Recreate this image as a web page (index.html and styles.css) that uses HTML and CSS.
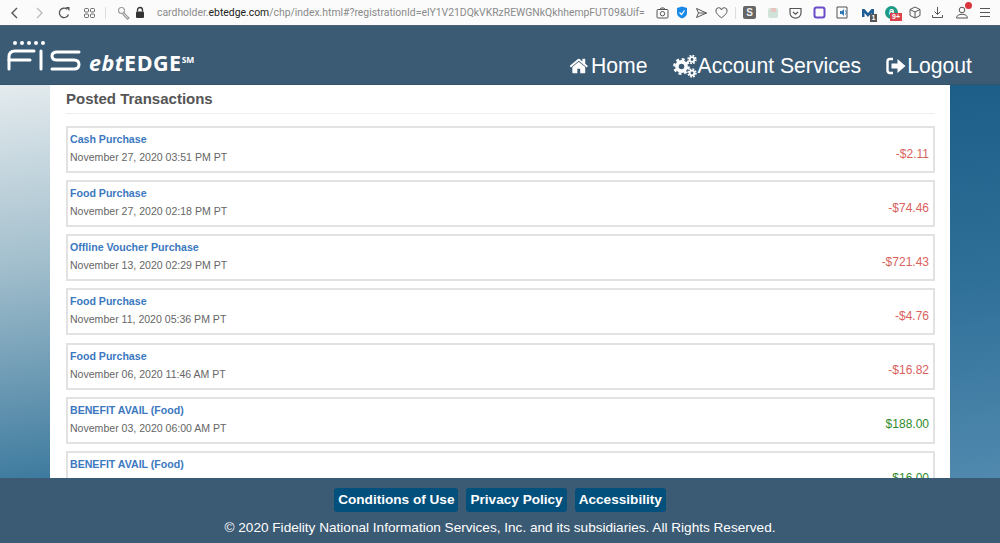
FILE: index.html
```html
<!DOCTYPE html>
<html lang="en">
<head>
    <meta charset="UTF-8">
    <meta name="viewport" content="width=device-width, initial-scale=1.0">
    <title>ebtEDGE - Posted Transactions</title>
    <link rel="stylesheet" href="styles.css">
</head>
<body>
    <div class="browser-bar">
        <div class="bar-left">
            <svg class="tb-icon" width="12" height="14" viewBox="0 0 12 14"><path d="M8 2 3 7l5 5" fill="none" stroke="#555" stroke-width="1.4"/></svg>
            <svg class="tb-icon" width="12" height="14" viewBox="0 0 12 14"><path d="M4 2l5 5-5 5" fill="none" stroke="#bbb" stroke-width="1.4"/></svg>
            <svg class="tb-icon" width="14" height="14" viewBox="0 0 14 14"><path d="M11.5 8.5A4.7 4.7 0 1 1 10 3.2" fill="none" stroke="#555" stroke-width="1.3"/><path d="M8.5 1h4v4z" fill="#555"/></svg>
            <svg class="tb-icon" width="13" height="12" viewBox="0 0 13 12"><g fill="none" stroke="#666"><rect x="1.5" y="1.5" width="4" height="3.5" rx="1"/><rect x="7.5" y="1.5" width="4" height="3.5" rx="1"/><rect x="1.5" y="7" width="4" height="3.5" rx="1"/><rect x="7.5" y="7" width="4" height="3.5" rx="1"/></g></svg>
            <span class="bar-divider"></span>
            <svg class="tb-icon key" width="14" height="14" viewBox="0 0 14 14"><g fill="none" stroke="#999" stroke-width="1.1"><circle cx="4.5" cy="4.5" r="3"/><path d="M6.7 6.7 12 12l-1.5 1.2L5.6 8"/></g></svg>
            <svg class="tb-icon lock" width="10" height="13" viewBox="0 0 10 13"><path d="M2.5 5.5V4a2.5 2.5 0 0 1 5 0v1.5" fill="none" stroke="#333" stroke-width="1.3"/><rect x="1" y="5.5" width="8" height="6.5" rx="1" fill="#333"/></svg>
        </div>
        <div class="url">cardholder.<b>ebtedge.com</b>/chp/index.html#?registrationId=elY1V21DQkVKRzREWGNkQkhhempFUT09&amp;Uif=</div>
        <div class="bar-right">
            <svg width="13" height="12" viewBox="0 0 13 12"><rect x="1" y="2.5" width="11" height="8.5" rx="1" fill="none" stroke="#555"/><circle cx="6.5" cy="6.7" r="2.2" fill="none" stroke="#555"/><path d="M4 2.5l1-1.5h3l1 1.5" fill="none" stroke="#555"/></svg>
            <svg width="12" height="13" viewBox="0 0 12 13"><path d="M6 .5 11 2v5c0 3-2.500 4.500-5 5.500C3.500 11.500 1 10 1 7V2z" fill="#1a8ae8"/><path d="M3.500 6.500 5.500 8.500 8.500 4.500" fill="none" stroke="#fff" stroke-width="1.200"/></svg>
            <svg width="13" height="12" viewBox="0 0 13 12"><path d="M1.500 1.500 11.500 6l-10 4.500 2-4.500zM3.500 6h8" fill="none" stroke="#555"/></svg>
            <svg width="13" height="12" viewBox="0 0 13 12"><path d="M6.500 10.800C2 7.500 1 5.700 1 4a2.700 2.700 0 0 1 5.500-1A2.700 2.700 0 0 1 12 4c0 1.700-1 3.500-5.500 6.800z" fill="none" stroke="#555"/></svg>
            <span class="bar-divider"></span>
            <div class="bar-ext">
                <span class="ext-s">S</span>
                <svg width="12" height="12" viewBox="0 0 12 12"><rect x="1" y="1" width="10" height="10" rx="2" fill="#cfe3d8"/><rect x="4" y="1" width="5" height="4" fill="#e8c4c0"/></svg>
                <svg width="13" height="12" viewBox="0 0 13 12"><path d="M1 1.500h11V6a5.500 5.200 0 0 1-11 0z" fill="none" stroke="#555" stroke-width="1.200"/><path d="M4 5l2.500 2.300L9 5" fill="none" stroke="#555" stroke-width="1.200"/></svg>
                <svg width="13" height="13" viewBox="0 0 13 13"><rect x="1.500" y="1.500" width="10" height="10" rx="2" fill="none" stroke="#6a4bc8" stroke-width="2"/></svg>
                <svg width="14" height="13" viewBox="0 0 14 13"><path d="M1 1h10v11H1z" fill="none" stroke="#555"/><path d="M4 5h2l2-2v7L6 8H4z" fill="#2f78b8"/><path d="M9.500 4.500a3 3 0 0 1 0 4" fill="none" stroke="#2f78b8"/></svg>
                <span class="ext-badge-wrap">
                    <svg width="14" height="12" viewBox="0 0 14 12"><path d="M1 10V2h2.500L7 6l3.500-4H13v8h-2.500V6L7 10 3.500 6v4z" fill="#1f5f95"/></svg>
                    <span class="ext-badge ext-badge-grey">1</span>
                </span>
                <span class="ext-badge-wrap">
                    <span class="ext-round">a</span>
                    <span class="ext-badge ext-badge-red">9+</span>
                </span>
                <svg width="12" height="13" viewBox="0 0 12 13"><path d="M6 1 11 3.500v6L6 12 1 9.500v-6zM1 3.500 6 6l5-2.500M6 6v6" fill="none" stroke="#555"/></svg>
                <svg width="13" height="13" viewBox="0 0 13 13"><path d="M6.500 1v7M3.500 5.500l3 3 3-3M1.500 9v2.500h10V9" fill="none" stroke="#555"/></svg>
                <span class="ext-badge-wrap">
                    <svg width="14" height="13" viewBox="0 0 14 13"><circle cx="7" cy="4" r="2.800" fill="none" stroke="#555"/><path d="M1.500 12c0-5 11-5 11 0z" fill="none" stroke="#555"/></svg>
                    <span class="user-dot"></span>
                </span>
                <svg width="12" height="11" viewBox="0 0 12 11"><path d="M1 1.500h10M1 5.500h10M1 9.500h10" stroke="#555" stroke-width="1.200"/></svg>
            </div>
        </div>
    </div>

    <div class="header">
        <div class="brand">
            <svg class="fis-logo" width="74" height="34" viewBox="0 0 74 34">
                <g fill="#fff">
                    <circle cx="8" cy="3" r="2"/><circle cx="15" cy="3" r="2"/><circle cx="22" cy="3" r="2"/><circle cx="29" cy="3" r="2"/><circle cx="36" cy="3" r="2"/>
                </g>
                <g fill="none" stroke="#fff" stroke-width="3" stroke-linecap="round">
                    <path d="M2 29V17q0-6 6-6h19"/>
                    <path d="M2 20h21"/>
                    <path d="M34 11v18"/>
                    <path d="M72 12H50q-5 0-5 4t5 4h17q5 0 5 4.500T67 29H45"/>
                </g>
            </svg>
            <span class="brand-name"><i>ebt</i>EDGE<sup>SM</sup></span>
        </div>
        <nav class="nav">
            <a class="nav-link" href="#">
                <svg width="21" height="20" viewBox="0 0 1792 1792"><path fill="#fff" d="M1408 992v480q0 26-19 45t-45 19h-384v-384h-256v384h-384q-26 0-45-19t-19-45v-480q0-1 .5-3t.5-3l575-474 575 474q1 2 1 6zm223-69l-62 74q-8 9-21 11h-3q-13 0-21-7l-692-577-692 577q-12 8-24 7-13-2-21-11l-62-74q-8-10-7-23.500t11-21.500l719-599q32-26 76-26t76 26l244 204v-195q0-14 9-23t23-9h192q14 0 23 9t9 23v408l219 182q10 8 11 21.500t-7 23.500z"/></svg>Home
            </a>
            <a class="nav-link" href="#">
                <svg width="24" height="24" viewBox="0 0 24 24" fill="none" stroke="#fff">
                    <circle cx="8.500" cy="12.500" r="4.600" stroke-width="3.600"/>
                    <circle cx="8.500" cy="12.500" r="7.200" stroke-width="2.400" stroke-dasharray="3 2.650"/>
                    <circle cx="19" cy="5.500" r="2.300" stroke-width="1.800"/>
                    <circle cx="19" cy="5.500" r="3.900" stroke-width="1.600" stroke-dasharray="1.800 1.260"/>
                    <circle cx="19" cy="19" r="2.300" stroke-width="1.800"/>
                    <circle cx="19" cy="19" r="3.900" stroke-width="1.600" stroke-dasharray="1.800 1.260"/>
                </svg>Account Services
            </a>
            <a class="nav-link" href="#">
                <svg width="20" height="18" viewBox="0 0 20 18"><path d="M7 2H4Q1.500 2 1.500 4.500v9Q1.500 16 4 16h3" fill="none" stroke="#fff" stroke-width="2.400"/><path d="M5.500 6.500h6V2l8 7-8 7v-4.500h-6z" fill="#fff"/></svg>Logout
            </a>
        </nav>
    </div>

    <div class="main">
        <div class="panel">
            <h2>Posted Transactions</h2>
            <div class="tx-list" id="tx-list"></div>
        </div>
    </div>

    <div class="footer">
        <div class="footer-links">
            <a class="footer-btn" href="#">Conditions of Use</a>
            <a class="footer-btn" href="#">Privacy Policy</a>
            <a class="footer-btn" href="#">Accessibility</a>
        </div>
        <div class="copyright">© 2020 Fidelity National Information Services, Inc. and its subsidiaries. All Rights Reserved.</div>
    </div>

    <script>
        const transactions = [
            { name: "Cash Purchase", date: "November 27, 2020 03:51 PM PT", amount: "-$2.11" },
            { name: "Food Purchase", date: "November 27, 2020 02:18 PM PT", amount: "-$74.46" },
            { name: "Offline Voucher Purchase", date: "November 13, 2020 02:29 PM PT", amount: "-$721.43" },
            { name: "Food Purchase", date: "November 11, 2020 05:36 PM PT", amount: "-$4.76" },
            { name: "Food Purchase", date: "November 06, 2020 11:46 AM PT", amount: "-$16.82" },
            { name: "BENEFIT AVAIL (Food)", date: "November 03, 2020 06:00 AM PT", amount: "$188.00" },
            { name: "BENEFIT AVAIL (Food)", date: "November 01, 2020 06:00 AM PT", amount: "$16.00" }
        ];

        const list = document.getElementById("tx-list");
        transactions.forEach(tx => {
            const row = document.createElement("div");
            const sign = tx.amount.startsWith("-") ? "debit" : "credit";
            row.className = "tx-row";
            row.innerHTML = `
                <div>
                    <a class="tx-name" href="#">${tx.name}</a>
                    <div class="tx-date">${tx.date}</div>
                </div>
                <div class="tx-amount ${sign}">${tx.amount}</div>
            `;
            list.appendChild(row);
        });
    </script>
</body>
</html>
```

FILE: styles.css
```css
* {
    box-sizing: border-box;
}
body {
    margin: 0;
    height: 100vh;
    display: flex;
    flex-direction: column;
    overflow: hidden;
    font-family: "Liberation Sans", Arial, sans-serif;
    color: #555;
}
a {
    text-decoration: none;
}

/* browser chrome */
.browser-bar {
    height: 25px;
    flex: none;
    display: flex;
    align-items: center;
    background: #fbfbfb;
    padding: 0 11px 0 9px;
}
.bar-left {
    display: flex;
    align-items: center;
    gap: 12px;
    width: 148px;
    flex: none;
}
.bar-left .bar-divider {
    margin-left: -3px;
}
.tb-icon.key {
    margin-left: -1px;
}
.tb-icon.lock {
    margin-left: -8px;
}
.bar-divider {
    width: 1px;
    height: 12px;
    background: #ddd;
}
.url {
    width: 491px;
    flex: none;
    overflow: hidden;
    white-space: nowrap;
    font-family: Roboto, sans-serif;
    font-size: 10.4px;
    color: #8a8a8a;
}
.url b {
    font-weight: 400;
    color: #222;
}
.bar-right {
    flex: 1;
    display: flex;
    align-items: center;
    gap: 7px;
    padding-left: 8px;
}
.bar-ext {
    display: flex;
    align-items: center;
    gap: 10.5px;
}
.ext-s {
    width: 13px;
    height: 13px;
    background: #666;
    color: #eee;
    font-size: 10px;
    font-weight: bold;
    text-align: center;
    line-height: 13px;
    border-radius: 2px;
}
.ext-badge-wrap {
    position: relative;
    display: flex;
}
.ext-badge {
    position: absolute;
    top: 7px;
    left: 9px;
    height: 8px;
    color: #fff;
    font-size: 7px;
    font-weight: bold;
    line-height: 8px;
    padding: 0 2px;
}
.ext-badge-grey {
    background: #555;
}
.ext-badge-red {
    background: #d9444c;
    left: 5px;
}
.ext-round {
    width: 13px;
    height: 13px;
    border-radius: 50%;
    background: #1e9a86;
    color: #fff;
    font-size: 10px;
    font-weight: bold;
    text-align: center;
    line-height: 12px;
}
.user-dot {
    position: absolute;
    top: -4px;
    right: -3px;
    width: 7px;
    height: 7px;
    border-radius: 50%;
    background: #d9363e;
}

/* site header */
.header {
    height: 60px;
    flex: none;
    display: flex;
    justify-content: space-between;
    background: #3b5a74;
    border-top: 1px solid #4e5f72;
    border-bottom: 1px solid #34536c;
}
.brand {
    display: flex;
    align-items: flex-end;
    padding: 0 0 10px 7px;
}
.brand-name {
    margin: 0 0 1px 8px;
    font-family: "Open Sans", sans-serif;
    font-size: 21.5px;
    font-weight: 700;
    line-height: 20px;
    color: #fff;
    letter-spacing: 0.5px;
}
.brand-name sup {
    font-size: 8.5px;
    line-height: 0;
    vertical-align: 8px;
    letter-spacing: 0;
}
.nav {
    display: flex;
    align-items: flex-end;
    gap: 25px;
    padding: 0 28px 4px 0;
}
.nav-link {
    display: flex;
    align-items: center;
    gap: 1px;
    color: #fff;
    font-size: 21.2px;
    line-height: 28px;
}

/* transactions */
.main {
    flex: 1;
    min-height: 0;
    padding: 0 50px;
    background:
        linear-gradient(172deg, #e4ebee 0%, #a3bfcd 45%, #3d7a9e 100%) left / 50px 100% no-repeat,
        linear-gradient(172deg, #1c5e87 0%, #2f7099 50%, #5189ae 100%) right / 50px 100% no-repeat;
}
.panel {
    height: 100%;
    overflow: hidden;
    background: #fff;
    padding: 0 15px 0 16px;
}
.panel h2 {
    margin: 0;
    height: 29px;
    padding-top: 5px;
    font-size: 15px;
    line-height: 18px;
    color: #555;
    border-bottom: 1px solid #eee;
}
.tx-list {
    display: flex;
    flex-direction: column;
    gap: 7.17px;
    padding-top: 12px;
}
.tx-row {
    height: 47px;
    flex: none;
    display: flex;
    align-items: center;
    justify-content: space-between;
    border: 2px solid #e2e2e2;
    padding: 0 4px 0 2px;
}
.tx-name {
    display: block;
    margin-top: -2px;
    font-size: 10.6px;
    font-weight: bold;
    line-height: 13px;
    color: #3b78c0;
}
.tx-date {
    margin-top: 5px;
    font-size: 10.55px;
    line-height: 13px;
    color: #666;
}
.tx-amount {
    padding-top: 8px;
    font-size: 12px;
}
.debit {
    color: #d9625e;
}
.credit {
    color: #2e8b2e;
}

/* footer */
.footer {
    height: 65px;
    flex: none;
    background: #3b5a74;
    text-align: center;
    color: #fff;
    padding-top: 10px;
}
.footer-links {
    display: flex;
    justify-content: center;
    gap: 8px;
}
.footer-btn {
    height: 24px;
    padding: 0 4px;
    border-radius: 3px;
    background: #04507c;
    color: #fff;
    font-size: 13.6px;
    font-weight: bold;
    line-height: 24px;
}
.copyright {
    margin-top: 6px;
    font-size: 13.6px;
    line-height: 20px;
}
```
